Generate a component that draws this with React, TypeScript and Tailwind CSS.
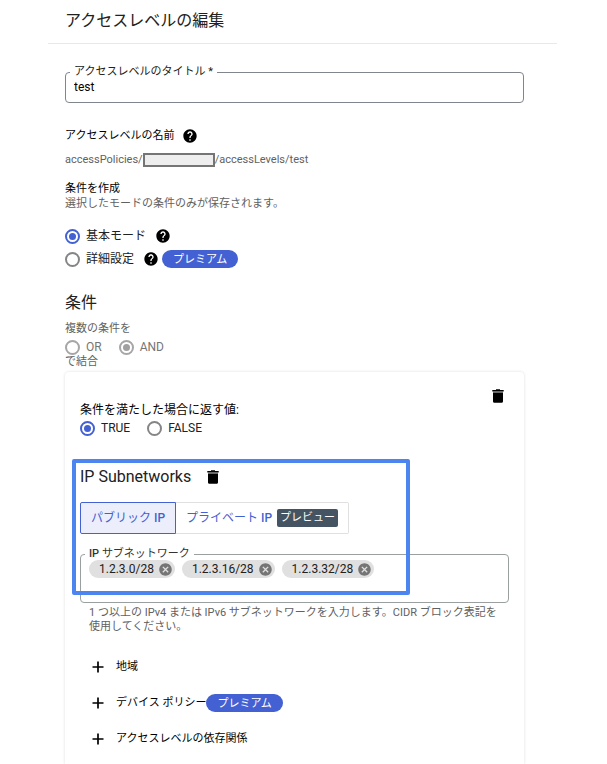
import type { ReactNode } from 'react';
import { MdCancel, MdHelp } from 'react-icons/md';

const subnets = ['1.2.3.0/28', '1.2.3.16/28', '1.2.3.32/28'];

function HelpButton({ label }: { label: string }) {
  return (
    <button type="button" aria-label={label} className="text-black">
      <MdHelp className="size-4" />
    </button>
  );
}

function TrashButton({ label }: { label: string }) {
  return (
    <button type="button" aria-label={label} className="text-black">
      <svg viewBox="0 0 12 14" className="h-[14px] w-3" fill="currentColor" aria-hidden="true">
        <path d="M4 .3h4V1h3.7v1.5H.3V1H4zM1 3.5h10v8.7c0 1-.8 1.6-1.7 1.6H2.7c-.9 0-1.7-.6-1.7-1.6z" />
        <path d="M1 2.5h10v1H1z" opacity=".35" />
      </svg>
    </button>
  );
}

function PremiumBadge() {
  return (
    <span className="flex h-[18px] items-center rounded-full bg-[#4361d2] px-[11px] text-[11px] leading-none text-white">
      プレミアム
    </span>
  );
}

type RadioProps = {
  name: string;
  children: ReactNode;
  defaultChecked?: boolean;
  disabled?: boolean;
};

function Radio({ name, children, defaultChecked, disabled }: RadioProps) {
  return (
    <label className="flex items-center gap-[6px] text-xs leading-4 text-[#212121] has-disabled:text-[#757575]">
      <input
        type="radio"
        name={name}
        defaultChecked={defaultChecked}
        disabled={disabled}
        className="grid size-[15px] appearance-none place-content-center rounded-full border-2 border-[#858585] before:size-[7px] before:rounded-full checked:border-[#4361d2] checked:before:bg-[#4361d2] disabled:border-[#a6a6a6] disabled:checked:before:bg-[#a0a0a0]"
      />
      {children}
    </label>
  );
}

function AddRow({ label, premium }: { label: string; premium?: boolean }) {
  return (
    <li className="flex h-9 items-center">
      <button type="button" className="flex items-center gap-3 text-[11px] text-black">
        <svg viewBox="0 0 12 12" className="size-3" aria-hidden="true">
          <path d="M6 .5v11M.5 6h11" stroke="currentColor" strokeWidth="1.7" />
        </svg>
        {label}
      </button>
      {premium && <PremiumBadge />}
    </li>
  );
}

function SubnetField() {
  return (
    <>
      <fieldset className="mt-[14px] h-[55px] min-w-0 rounded border border-[#9aa0a0] px-2 pb-2">
        <legend className="-ml-1 px-1 text-[11px] leading-3 font-medium text-[#333]">
          <label htmlFor="subnet">
            IP <span className="font-normal">サブネットワーク</span>
          </label>
        </legend>
        <div className="flex items-center gap-[7px]">
          {subnets.map((s) => (
            <span
              key={s}
              className="flex h-[18px] items-center gap-1 rounded-full bg-[#e0e0e0] pr-[2px] pl-[10px] text-xs text-[#212121]"
            >
              {s}
              <button type="button" aria-label={`${s} を削除`} className="text-[#757575]">
                <MdCancel className="size-[15px]" />
              </button>
            </span>
          ))}
          <input id="subnet" className="min-w-0 flex-1 text-xs outline-none" />
        </div>
      </fieldset>
      <p className="mt-[3px] pr-2 pl-[9px] text-[11px] leading-[14px] text-[#616161]">
        1 つ以上の IPv4 または IPv6 サブネットワークを入力します。CIDR ブロック表記を使用してください。
      </p>
    </>
  );
}

function ConditionCard() {
  return (
    <section className="flex-1 rounded-t bg-white px-[15px] pt-[17px] shadow-[0_0_3px_rgba(0,0,0,0.14)]">
      <div className="flex justify-end pr-[5px]">
        <TrashButton label="条件を削除" />
      </div>

      <p className="text-xs leading-[14px] text-black">条件を満たした場合に返す値:</p>
      <div className="mt-[3px] flex gap-[17px]">
        <Radio name="result" defaultChecked>TRUE</Radio>
        <Radio name="result">FALSE</Radio>
      </div>

      <div className="relative mt-[31px]">
        <div className="flex items-center gap-4">
          <h3 className="text-base leading-5 text-[#212121]">IP Subnetworks</h3>
          <TrashButton label="IP Subnetworks を削除" />
        </div>
        <div className="mt-[15px] flex text-xs text-[#4361d2]">
          <button type="button" className="h-8 rounded-l-xs border border-[#4361d2] bg-[#eceffb] px-[10px]">
            パブリック <span className="font-medium">IP</span>
          </button>
          <button
            type="button"
            className="flex h-8 items-center gap-[5px] rounded-r-xs border border-l-0 border-[#e0e0e0] px-[10px]"
          >
            <span>
              プライベート <span className="font-medium">IP</span>
            </span>
            <span className="flex h-[18px] items-center rounded-xs bg-[#455463] px-[3px] text-[11px] text-white">
              プレビュー
            </span>
          </button>
        </div>
        <SubnetField />
        <div className="pointer-events-none absolute -top-2 -left-2 h-[136px] w-[338px] rounded-xs border-4 border-[#4c85f0]" />
      </div>

      <ul className="mt-[15px] pl-3">
        <AddRow label="地域" />
        <AddRow label="デバイス ポリシー" premium />
        <AddRow label="アクセスレベルの依存関係" />
      </ul>
    </section>
  );
}

export default function App() {
  return (
    <main className="flex min-h-screen flex-col bg-white pr-[50px] pl-12 font-[Roboto,'Noto_Sans_CJK_JP',sans-serif] text-[11px] text-[#212121]">
      <header className="border-b border-[#e8e8e8] px-[17px] pt-[10px] pb-[11px]">
        <h1 className="text-base leading-[22px]">アクセスレベルの編集</h1>
      </header>

      <div className="flex flex-1 flex-col pt-[21px] pr-[33px] pl-[17px]">
        <fieldset className="min-w-0 rounded border border-[#80868b] px-2">
          <legend className="-ml-1 px-1 leading-[14px]">
            <label htmlFor="title">アクセスレベルのタイトル *</label>
          </legend>
          <input
            id="title"
            defaultValue="test"
            className="mb-[6px] block h-[17px] w-full pb-[2px] text-xs text-black outline-none"
          />
        </fieldset>

        <div className="mt-[25px] flex items-center gap-2 text-black">
          <h2 className="leading-4">アクセスレベルの名前</h2>
          <HelpButton label="アクセスレベルの名前について" />
        </div>
        <p className="mt-2 flex items-center leading-4 text-[#616161]">
          accessPolicies/
          <span className="h-[14px] w-[72px] border-2 border-[#757575] bg-[#eee]" />
          /accessLevels/test
        </p>

        <h2 className="mt-[13px] leading-4 text-black">条件を作成</h2>
        <p className="leading-[14px] text-[#616161]">選択したモードの条件のみが保存されます。</p>

        <div className="mt-4 flex flex-col gap-[5px]">
          <div className="flex h-[18px] items-center gap-[9px]">
            <Radio name="mode" defaultChecked>基本モード</Radio>
            <HelpButton label="基本モードについて" />
          </div>
          <div className="flex h-[18px] items-center gap-[3px]">
            <div className="flex items-center gap-[9px]">
              <Radio name="mode">詳細設定</Radio>
              <HelpButton label="詳細設定について" />
            </div>
            <PremiumBadge />
          </div>
        </div>

        <h2 className="mt-[25px] text-base leading-5">条件</h2>
        <p className="mt-2 leading-4 text-[#616161]">複数の条件を</p>
        <div className="mt-[2px] flex gap-[17px]">
          <Radio name="combine" disabled>OR</Radio>
          <Radio name="combine" disabled defaultChecked>AND</Radio>
        </div>
        <p className="mb-[3px] leading-[14px] text-[#616161]">で結合</p>

        <ConditionCard />
      </div>
    </main>
  );
}
